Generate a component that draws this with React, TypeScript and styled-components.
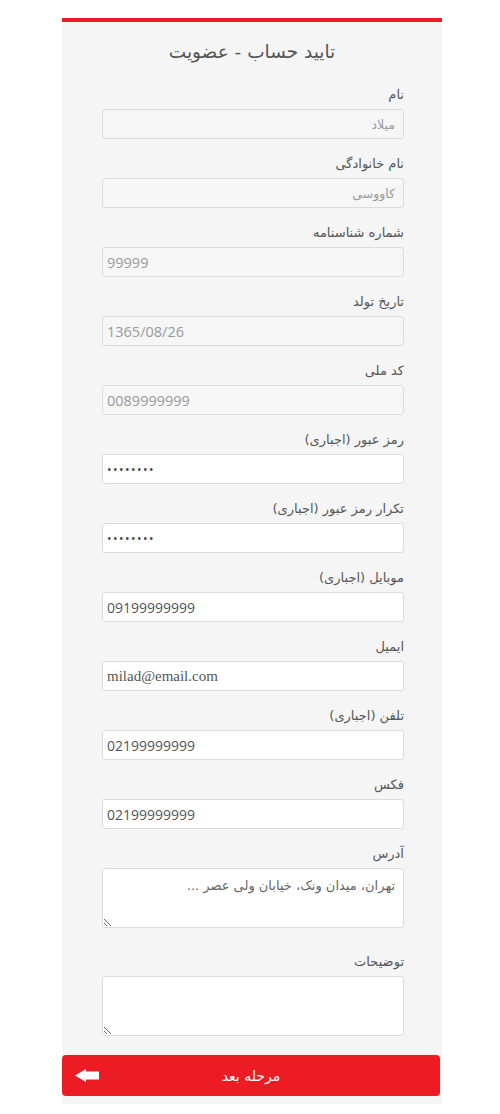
import React from "react";
import styled, { createGlobalStyle } from "styled-components";

const GlobalStyle = createGlobalStyle`
  html, body {
    margin: 0;
    padding: 0;
    background: #fff;
  }
  body {
    font-family: "DejaVu Sans", "Open Sans", sans-serif;
  }
`;

type Field = {
  label: string;
  value: string;
  disabled?: boolean;
  ltr?: boolean;
  type?: string;
  serif?: boolean;
};

const fields: Field[] = [
  { label: "نام", value: "میلاد", disabled: true },
  { label: "نام خانوادگی", value: "کاووسی", disabled: true },
  { label: "شماره شناسنامه", value: "99999", disabled: true, ltr: true },
  { label: "تاریخ تولد", value: "1365/08/26", disabled: true, ltr: true },
  { label: "کد ملی", value: "0089999999", disabled: true, ltr: true },
  { label: "رمز عبور (اجباری)", value: "12345678", type: "password", ltr: true },
  { label: "تکرار رمز عبور (اجباری)", value: "12345678", type: "password", ltr: true },
  { label: "موبایل (اجباری)", value: "09199999999", ltr: true },
  { label: "ایمیل", value: "milad@email.com", ltr: true, serif: true },
  { label: "تلفن (اجباری)", value: "02199999999", ltr: true },
  { label: "فکس", value: "02199999999", ltr: true },
];

function App() {
  return (
    <>
      <GlobalStyle />
      <Panel dir="rtl">
        <Title>تایید حساب - عضویت</Title>
        <FormBody>
          {fields.map((f) => (
            <Group key={f.label}>
              <Label>{f.label}</Label>
              <Input
                type={f.type || "text"}
                defaultValue={f.value}
                disabled={f.disabled}
                dir={f.ltr ? "ltr" : "rtl"}
                $serif={f.serif}
                $muted={f.disabled}
              />
            </Group>
          ))}
          <Group $wide>
            <Label>آدرس</Label>
            <TextArea defaultValue="تهران، میدان ونک، خیابان ولی عصر ..." />
          </Group>
          <Group $last>
            <Label>توضیحات</Label>
            <TextArea defaultValue="" />
          </Group>
        </FormBody>
        <Footer>
          <NextButton type="button">
            <ArrowIcon viewBox="0 0 24 13">
              <path d="M0 6.5 L11 0 L11 2.5 L24 2.5 L24 10.5 L11 10.5 L11 13 Z" fill="#fff" />
            </ArrowIcon>
            <ButtonText dir="rtl">مرحله بعد</ButtonText>
          </NextButton>
        </Footer>
      </Panel>
    </>
  );
}

export default App;

const Panel = styled.div`
  width: 380px;
  margin: 18px 0 10px 62px;
  background: #f5f5f5;
  border-top: 4px solid #ed1c24;
  padding: 15px 0 8px;
  box-sizing: border-box;
`;

const Title = styled.h2`
  margin: 0 0 18px;
  height: 30px;
  line-height: 30px;
  text-align: center;
  font-size: 18.5px;
  font-weight: normal;
  color: #555;
`;

const FormBody = styled.div`
  padding: 0 38px 0 40px;
`;

const Group = styled.div<{ $wide?: boolean; $last?: boolean }>`
  display: flex;
  flex-direction: column;
  margin-bottom: ${(p) => (p.$last ? "19px" : p.$wide ? "24px" : "15px")};
`;

const Label = styled.label`
  display: block;
  height: 20px;
  line-height: 20px;
  margin-bottom: 4px;
  font-size: 13px;
  color: #555;
  text-align: right;
`;

const Input = styled.input<{ $serif?: boolean; $muted?: boolean }>`
  box-sizing: border-box;
  width: 100%;
  height: 30px;
  margin: 0;
  padding: 0 4px;
  border: 1px solid #dcdcdc;
  border-radius: 3px;
  background: ${(p) => (p.$muted ? "#f6f6f6" : "#fff")};
  color: ${(p) => (p.$muted ? "#9a9a9a" : "#555")};
  font-family: ${(p) =>
    p.$serif ? '"Liberation Serif", serif' : '"Open Sans", "DejaVu Sans", sans-serif'};
  font-size: ${(p) => (p.$serif ? "15px" : p.$muted ? "14.5px" : "14px")};
  outline: none;

  &[dir="rtl"] {
    font-family: "DejaVu Sans", sans-serif;
    font-size: 12.5px;
    text-align: right;
    padding: 0 8px;
  }

  &[type="password"] {
    color: #444;
    font-size: 12px;
    letter-spacing: 1.5px;
  }
`;

const TextArea = styled.textarea`
  box-sizing: border-box;
  display: block;
  width: 100%;
  height: 60px;
  margin: 0;
  padding: 8px 8px;
  border: 1px solid #dcdcdc;
  border-radius: 3px;
  background: #fff;
  color: #666;
  font-family: "DejaVu Sans", sans-serif;
  font-size: 13px;
  line-height: 18px;
  resize: vertical;
  outline: none;
`;

const Footer = styled.div`
  padding: 0 2px 0 0;
`;

const NextButton = styled.button`
  direction: ltr;
  display: grid;
  grid-template-columns: 1fr auto 1fr;
  align-items: center;
  width: 100%;
  height: 41px;
  margin: 0;
  padding: 0 13px;
  border: none;
  border-radius: 4px;
  background: #ed1c24;
  cursor: pointer;
`;

const ArrowIcon = styled.svg`
  width: 24px;
  height: 13px;
  justify-self: start;
  display: block;
`;

const ButtonText = styled.span`
  color: #fff;
  font-family: "DejaVu Sans", sans-serif;
  font-size: 14px;
`;
